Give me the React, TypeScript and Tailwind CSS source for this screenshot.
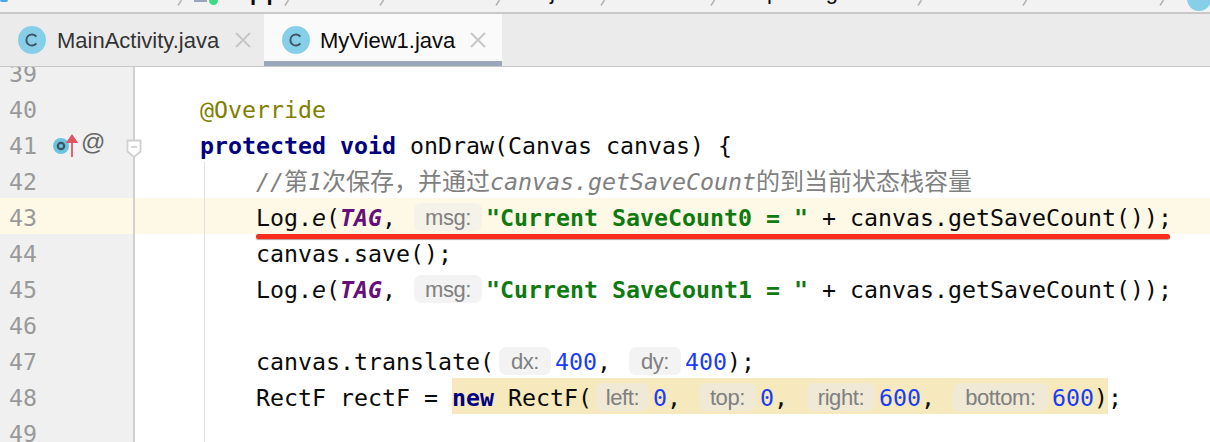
import type { ReactNode } from "react"

const kw = "font-bold text-[#000080]"
const str = "font-bold text-[#0f7a10]"
const num = "text-[#1a3cf5]"
const tag = "font-bold italic text-[#660e7a]"
const cjk = "text-[24px] not-italic"

function ClassIcon() {
    return (
        <svg width="28" height="28" viewBox="0 0 28 28" className="shrink-0">
            <circle cx="14" cy="14" r="14" fill="#87cfe8" />
            <path d="M18.4 10.6a5.6 5.6 0 1 0 0 6.8" fill="none" stroke="#3f5664" strokeWidth="2" />
        </svg>
    )
}

function CloseIcon() {
    return (
        <svg width="16" height="16" viewBox="0 0 16 16" className="shrink-0">
            <path d="M1 1l14 14M15 1L1 15" stroke="#c6c6c6" strokeWidth="1.8" />
        </svg>
    )
}

function Crumb({ width, children }: { width: number; children?: ReactNode }) {
    return (
        <div className="flex h-full shrink-0 overflow-hidden" style={{ width }}>
            <div className="flex-1 overflow-hidden">{children}</div>
            <svg width="8" height="12" viewBox="0 0 8 12" className="shrink-0">
                <path d="M5.5 0L2 5.5" stroke="#b5b5b5" strokeWidth="1.6" />
            </svg>
        </div>
    )
}

function Hint({ w, ml = 4, mr = 4, on = "plain", children }: { w: number; ml?: number; mr?: number; on?: "plain" | "line" | "match"; children: ReactNode }) {
    const bg = on === "match" ? "bg-[#efe9d6]" : on === "line" ? "bg-[#f5f3e9]" : "bg-[#f3f3f3]"
    return (
        <span
            className={`mt-[-2px] inline-flex h-[28px] shrink-0 items-center justify-center rounded-[7px] font-['Liberation_Sans',sans-serif] text-[22px] tracking-[-0.4px] text-[#808080] ${bg}`}
            style={{ width: w, marginLeft: ml, marginRight: mr }}
        >
            {children}
        </span>
    )
}

function Row({
    n,
    guide = true,
    bg = "",
    h = 36,
    gutter,
    children,
}: {
    n: number
    guide?: boolean
    bg?: string
    h?: number
    gutter?: ReactNode
    children?: ReactNode
}) {
    return (
        <div className={`relative flex shrink-0 items-end overflow-visible ${bg}`} style={{ height: h }}>
            <div className="flex h-full w-[133px] shrink-0 items-end overflow-hidden pl-[9px] text-[#999999]">
                <div className="flex h-[36px] w-full shrink-0 items-center pt-[4px]">
                    <span className="w-[28px] shrink-0">{n}</span>
                    {gutter}
                </div>
            </div>
            <div className="h-full w-[2px] shrink-0 bg-[#d0d0d0]" />
            {guide ? (
                <div className="ml-[69px] flex h-full items-center border-l border-[#e2e2e2] pt-[4px] pl-[51px] whitespace-pre">{children}</div>
            ) : (
                <div className="ml-[65px] flex h-full items-center pt-[4px] whitespace-pre">{children}</div>
            )}
        </div>
    )
}

export default function App() {
    return (
        <div className="flex h-[442px] w-[1210px] flex-col overflow-hidden bg-white font-['DejaVu_Sans_Mono','Noto_Sans_CJK_SC',monospace] text-[23.25px] text-[#0b0b0b]">
            {/* breadcrumb, only its bottom edge is in the crop */}
            <div className="flex h-[12px] shrink-0 bg-[#f2f2f2] font-['Liberation_Sans',sans-serif] text-[22px] leading-[24px] whitespace-pre">
                <Crumb width={184}>
                    <div className="mt-[-7px] h-[9px] w-[8px] rounded-[2px] border-2 border-[#4aa8e8]" />
                </Crumb>
                <Crumb width={107}>
                    <div className="flex">
                        <div className="ml-[10px] h-[2px] w-[15px] bg-[#9aa7bb]" />
                        <div className="mt-[-5px] ml-[2px] h-[10px] w-[10px] rounded-full bg-[#3ddc84]" />
                        <div className="mt-[-19px] ml-[17px] font-bold tracking-[3px]">app</div>
                    </div>
                </Crumb>
                <Crumb width={95} />
                <Crumb width={116} />
                <Crumb width={105}>
                    <div className="mt-[-20px] ml-[48px]">java</div>
                </Crumb>
                <Crumb width={110} />
                <Crumb width={207}>
                    <div className="mt-[-20px] ml-[50px]">package</div>
                </Crumb>
                <Crumb width={105} />
                <Crumb width={137} />
                <div className="ml-[21px] mt-[-13px] h-[24px] w-[24px] shrink-0 rounded-full bg-[#87cfe8]" />
            </div>
            <div className="h-[2px] shrink-0 bg-[#c8c8c8]" />

            {/* tabs */}
            <div className="flex h-[52px] shrink-0 bg-[#ebebeb] font-['Liberation_Sans',sans-serif] text-[22px]">
                <div className="flex w-[264px] shrink-0 items-center pl-[18px] text-[#333333]">
                    <ClassIcon />
                    <span className="ml-[11px] w-[178px] shrink-0">MainActivity.java</span>
                    <CloseIcon />
                </div>
                <div className="flex w-[238px] shrink-0 items-center border-b-[5px] border-[#9aa7bb] bg-[#fafafa] pt-[5px] pl-[18px] text-[#0b0b0b]">
                    <ClassIcon />
                    <span className="ml-[10px] w-[150px] shrink-0">MyView1.java</span>
                    <CloseIcon />
                </div>
            </div>
            <div className="h-[1px] shrink-0 bg-[#c8c8c8]" />

            {/* editor */}
            <div className="flex min-h-0 flex-1 flex-col bg-white">
                <div className="[&>div>div:first-child]:bg-[#f0f0f0]">
                    <Row n={39} guide={false} h={23} />
                    <Row n={40} guide={false}>
                        <span className="text-[#808000]">@Override</span>
                    </Row>
                    <Row
                        n={41}
                        guide={false}
                        gutter={
                            <div className="ml-[16px] flex items-center">
                                <svg width="30" height="28" viewBox="0 0 30 28" className="shrink-0">
                                    <circle cx="8" cy="14" r="8" fill="#6cc5e0" />
                                    <circle cx="8" cy="14" r="3.2" fill="none" stroke="#3d5560" strokeWidth="2.2" />
                                    <path d="M19 25V5M14.5 10L19 3.500l4.500 6.500z" stroke="#e05463" strokeWidth="1.800" fill="#e05463" />
                                </svg>
                                <span className="mt-[-8px] ml-[-2px] font-['Liberation_Sans',sans-serif] text-[24px] text-[#666666]">@</span>
                            </div>
                        }
                    >
                        <span className={kw}>protected void</span> onDraw(Canvas canvas) {"{"}
                        <svg width="16" height="20" viewBox="0 0 16 20" className="absolute top-[13px] left-[126px]">
                            <path d="M1.500 1.500h13v11l-6.500 5.500-6.500-5.500z" fill="#ffffff" stroke="#d0d0d0" strokeWidth="1.800" />
                            <path d="M5 8h6" stroke="#c8c8c8" strokeWidth="1.500" />
                        </svg>
                    </Row>
                    <Row n={42}>
                        <span className="text-[#808080] italic">
                            //<span className={cjk}>第</span>1<span className={cjk}>次保存，并通过</span>canvas.getSaveCount<span className={cjk}>的到当前状态栈容量</span>
                        </span>
                    </Row>
                    <Row n={43} bg="bg-[#fef9e6] [&>div:first-child]:!bg-[#fef9e6]">
                        Log.<span className="italic">e</span>(<span className={tag}>TAG</span>,{" "}
                        <Hint w={68} on="line">msg:</Hint>
                        <span className={str}>"Current SaveCount0 = "</span> + canvas.getSaveCount());
                        <div className="absolute top-[36px] left-[256px] z-10 h-[5px] w-[914px] rounded-full bg-[#fb2c1c] shadow-[0_1px_1px_rgba(90,30,30,0.45)]" />
                    </Row>
                    <Row n={44}>canvas.save();</Row>
                    <Row n={45}>
                        Log.<span className="italic">e</span>(<span className={tag}>TAG</span>,{" "}
                        <Hint w={68}>msg:</Hint>
                        <span className={str}>"Current SaveCount1 = "</span> + canvas.getSaveCount());
                    </Row>
                    <Row n={46} />
                    <Row n={47}>
                        canvas.translate(<Hint w={52} ml={5}>dx:</Hint>
                        <span className={num}>400</span>,{" "}
                        <Hint w={52}>dy:</Hint>
                        <span className={num}>400</span>);
                    </Row>
                    <Row n={48}>
                        RectF rectF ={" "}
                        <span className="mt-[-4px] flex h-[36px] items-center bg-[#f6e9bd] pt-[4px]">
                            <span className={kw}>new</span> RectF(<Hint w={53} on="match">left:</Hint>
                            <span className={num}>0</span>,{" "}
                            <Hint w={57} on="match">top:</Hint>
                            <span className={num}>0</span>,{" "}
                            <Hint w={68} ml={5} on="match">right:</Hint>
                            <span className={num}>600</span>,{" "}
                            <Hint w={95} on="match">bottom:</Hint>
                            <span className={num}>600</span>)
                        </span>
                        ;
                    </Row>
                    <Row n={49} />
                </div>
            </div>
        </div>
    )
}
